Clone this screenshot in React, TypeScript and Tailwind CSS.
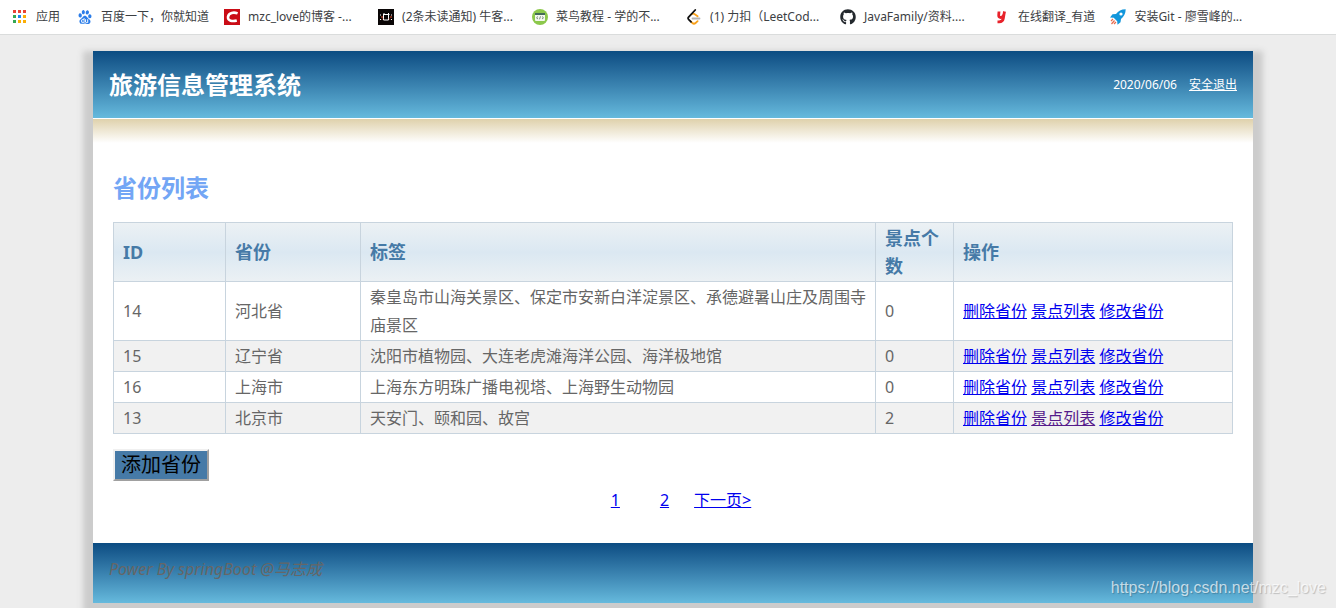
import type { ReactNode } from 'react';
import { FaGithub } from 'react-icons/fa';
import { SiBaidu } from 'react-icons/si';

interface Bookmark {
  name: string;
  icon: ReactNode;
  clipped?: boolean;
}

interface Province {
  id: number;
  name: string;
  tags: string;
  placeCount: number;
  visited?: boolean;
}

const AppsIcon = () => (
  <svg width="16" height="16" viewBox="0 0 16 16" shapeRendering="crispEdges">
    <path fill="#ea4335" d="M1 1h3v3H1zM6 1h3v3H6zM11 1h3v3h-3z" />
    <path fill="#34a853" d="M1 6h3v3H1zM1 11h3v3H1z" />
    <path fill="#1a86f0" d="M6 6h3v3H6z" />
    <path fill="#fbae05" d="M11 6h3v3h-3zM6 11h3v3H6zM11 11h3v3h-3z" />
  </svg>
);

const CsdnIcon = () => (
  <svg width="16" height="16" viewBox="0 0 16 16">
    <rect width="16" height="16" fill="#ca0c16" />
    <path d="M13.6 4.4C10 3 4.6 3.4 4 8c-.4 4 4.500 4.600 8.800 3.500" fill="none" stroke="#fff" strokeWidth="2.600" />
  </svg>
);

const NowcoderIcon = () => (
  <svg width="16" height="16" viewBox="0 0 16 16">
    <rect width="16" height="16" fill="#0a0606" />
    <path d="M6 4v1.500M10.500 4v1.500M5.500 6v5h5V6M5 5.500h6.500" fill="none" stroke="#fff" />
    <path d="M2.500 5.500v1M2.500 10v1M13.500 5.500v1M13.500 10v1" fill="none" stroke="#fff" />
    <path d="M3 8h2M12 8h2M4 10.500l1-1M12 10.500l-1-1" fill="none" stroke="#e8502c" />
  </svg>
);

const RunoobIcon = () => (
  <svg width="16" height="16" viewBox="0 0 16 16">
    <circle cx="8" cy="8" r="8" fill="#8cc84b" />
    <rect x="3" y="4" width="10" height="8" rx="1" fill="#f4f8ef" />
    <path d="M3 4h10v2H3z" fill="#456b58" />
    <path d="m6 7.500-1.500 1.300L6 10m4-2.500 1.500 1.300L10 10M8.500 7.300l-1 3" fill="none" stroke="#5d7565" strokeWidth=".8" />
  </svg>
);

const LeetcodeIcon = () => (
  <svg width="16" height="16" viewBox="0 0 16 16" fill="none" strokeWidth="1.800" strokeLinecap="round">
    <path d="M6.500 9.500h7" stroke="#b3b3b3" />
    <path d="m5 12.500 1.400 1.500q1.500 1.500 3.200 0l2-1.800M5.500 5.300q1.700-1.400 3.300 0l2.800 1.900" stroke="#f9a11b" />
    <path d="M9.200 1 2.600 8.200q-1 1.100 0 2.200L5 12.900" stroke="#111" />
  </svg>
);

const YoudaoIcon = () => (
  <svg width="16" height="16" viewBox="0 0 16 16">
    <path d="M5 2.500 4.700 6q-.2 2.500 2 2.500 2.500 0 3.200-2.800l.7-3.200M10.400 3 9.300 9.500q-.6 3.500-4.600 3.300H3.500" fill="none" stroke="#e8222b" strokeWidth="2.800" />
  </svg>
);

const RocketIcon = () => (
  <svg width="16" height="16" viewBox="0 0 16 16">
    <path d="M15.700.3C11 .4 8.500 2 6 5L2.500 5.300 0 8.600l3.700.2 3.500 3.500.3 3.500 3-2.600.5-3.200c3-2.700 4.600-5.200 4.700-9.700Z" fill="#1296db" />
    <circle cx="11" cy="5" r="1.600" fill="#fff" />
    <path d="m3 10-2 2m3.500-.5-3 3.500M6 13l-2 2" stroke="#e86a4c" strokeWidth="1.200" />
  </svg>
);

const bookmarks: Bookmark[] = [
  { name: '百度一下，你就知道', icon: <SiBaidu size={14} color="#2b7de9" /> },
  { name: 'mzc_love的博客 -...', icon: <CsdnIcon />, clipped: true },
  { name: '(2条未读通知) 牛客...', icon: <NowcoderIcon />, clipped: true },
  { name: '菜鸟教程 - 学的不...', icon: <RunoobIcon />, clipped: true },
  { name: '(1) 力扣（LeetCod...', icon: <LeetcodeIcon />, clipped: true },
  { name: 'JavaFamily/资料....', icon: <FaGithub size={16} color="#24292e" />, clipped: true },
  { name: '在线翻译_有道', icon: <YoudaoIcon /> },
  { name: '安装Git - 廖雪峰的...', icon: <RocketIcon />, clipped: true },
];

const provinces: Province[] = [
  { id: 14, name: '河北省', tags: '秦皇岛市山海关景区、保定市安新白洋淀景区、承德避暑山庄及周围寺庙景区', placeCount: 0 },
  { id: 15, name: '辽宁省', tags: '沈阳市植物园、大连老虎滩海洋公园、海洋极地馆', placeCount: 0 },
  { id: 16, name: '上海市', tags: '上海东方明珠广播电视塔、上海野生动物园', placeCount: 0 },
  { id: 13, name: '北京市', tags: '天安门、颐和园、故宫', placeCount: 2, visited: true },
];

// the tag column takes whatever width is left
const columns = [
  { title: 'ID', width: 'w-[112px]' },
  { title: '省份', width: 'w-[135px]' },
  { title: '标签', width: '' },
  { title: '景点个数', width: 'w-[78px]' },
  { title: '操作', width: 'w-[279px]' },
];

function BookmarkBar() {
  return (
    <nav className="flex h-[35px] items-center overflow-hidden border-b border-[#dadcdc] bg-white pl-3 text-[12px] leading-4 text-[#3c4043]">
      <a href="#apps" className="mr-[17px] flex shrink-0 items-center gap-2">
        <AppsIcon />
        应用
      </a>
      <div className="flex gap-[15px]">
        {bookmarks.map((item) => (
          <a key={item.name} href="#bookmark" className="flex shrink-0 items-center gap-2 whitespace-nowrap">
            <span className="flex size-4 items-center justify-center">{item.icon}</span>
            <span className={item.clipped ? 'w-[115px]' : ''}>{item.name}</span>
          </a>
        ))}
      </div>
    </nav>
  );
}

function ProvinceTable() {
  return (
    <table className="w-full table-fixed border-collapse text-left leading-7">
      <thead>
        <tr className="bg-linear-to-b from-[#ecf1f4] via-[#dbe8f2] to-[#ecf1f4] text-lg leading-7 text-[#467aa7]">
          {columns.map((col) => (
            <th key={col.title} className={`border border-[#c8d4de] py-px pr-2 pl-[9px] font-bold ${col.width}`}>
              {col.title}
            </th>
          ))}
        </tr>
      </thead>
      <tbody>
        {provinces.map((row) => (
          <tr key={row.id} className="even:bg-[#f1f1f1]">
            <td className="border border-[#c8d4de] py-px pr-2 pl-[9px]">{row.id}</td>
            <td className="border border-[#c8d4de] py-px pr-2 pl-[9px]">{row.name}</td>
            <td className="border border-[#c8d4de] py-px pr-2 pl-[9px]">{row.tags}</td>
            <td className="border border-[#c8d4de] py-px pr-2 pl-[9px]">{row.placeCount}</td>
            <td className="border border-[#c8d4de] py-px pr-2 pl-[9px] text-[#0000ee]">
              <a href="#delete" className="underline">删除省份</a>{' '}
              <a href="#places" className={row.visited ? 'text-[#551a8b] underline' : 'underline'}>景点列表</a>{' '}
              <a href="#edit" className="underline">修改省份</a>
            </td>
          </tr>
        ))}
      </tbody>
    </table>
  );
}

export default function App() {
  return (
    <div className="relative flex min-h-screen flex-col overflow-hidden bg-[#ededed] font-['Noto_Sans','Noto_Sans_CJK_SC',sans-serif] text-base text-[#666666]">
      <BookmarkBar />

      <div className="mx-auto w-full max-w-[1170px] pt-4 pb-[5px] pl-2.5">
        <div className="bg-white shadow-[0_10px_6px_10px_#cccccc]">
          <header className="flex items-center justify-between bg-linear-to-b from-[#0b4c82] to-[#66badd] px-4 py-4 text-white">
            <h1 className="text-2xl leading-[35px] font-bold">旅游信息管理系统</h1>
            <p className="flex gap-3 text-[12px] leading-4">
              <span>2020/06/06</span>
              <a href="#logout" className="underline">安全退出</a>
            </p>
          </header>
          <div className="mt-px h-6 bg-linear-to-b from-[#dfd1ab] to-white" />

          <main className="px-5 pt-7 pb-[29px]">
            <h2 className="mb-[18px] text-2xl leading-[33px] font-bold text-[#73a6f5]">省份列表</h2>
            <ProvinceTable />
            <button
              type="button"
              className="mt-[15px] block border-2 border-t-[#f0f0f0] border-r-[#a0a0a0] border-b-[#a0a0a0] border-l-[#f0f0f0] bg-[#467aa7] px-1.5 text-xl leading-7 text-black"
            >
              添加省份
            </button>
            <div className="mt-[5px] flex justify-center pl-4 leading-7 text-[#0000ee]">
              <a href="#page-1" className="mr-10 underline">1</a>
              <a href="#page-2" className="mr-[25px] underline">2</a>
              <a href="#next" className="underline">下一页&gt;</a>
            </div>
          </main>

          <footer className="h-[60px] bg-linear-to-b from-[#0b4c82] to-[#66badd] px-4 py-3 leading-7 italic">
            Power By springBoot @马志成
          </footer>
        </div>
      </div>

      <span className="absolute right-2.5 bottom-2 font-['Liberation_Sans',Arial,sans-serif] text-base leading-6 text-white/70 [text-shadow:1px_1px_1px_rgba(0,0,0,0.2)]">
        https://blog.csdn.net/mzc_love
      </span>
    </div>
  );
}
